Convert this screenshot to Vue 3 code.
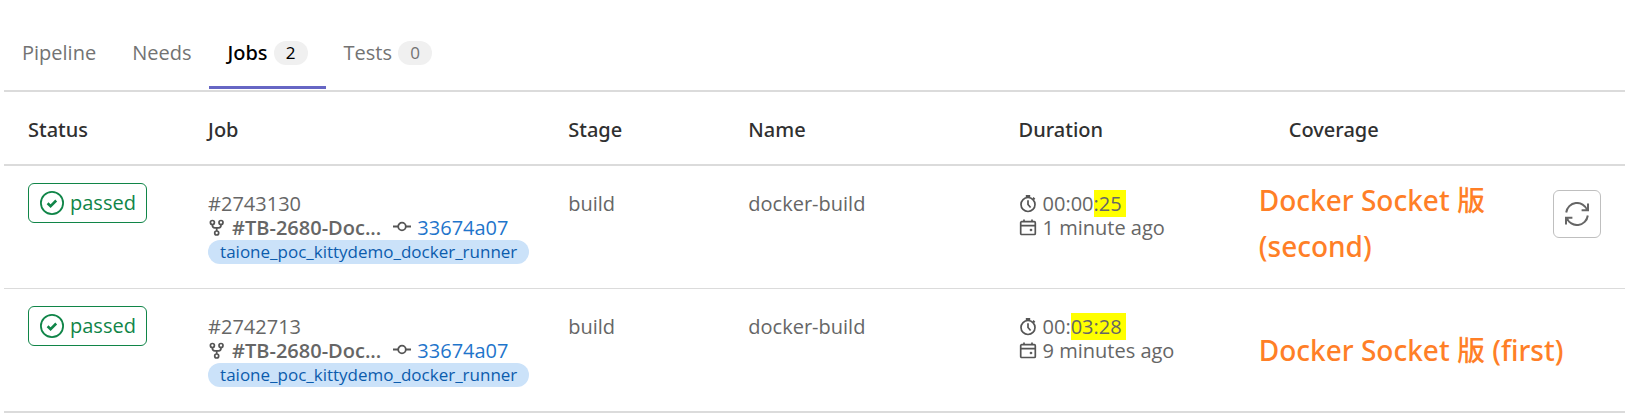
<script setup>
import { ref } from 'vue'

const active = ref('Jobs')

const tabs = [
  { label: 'Pipeline' },
  { label: 'Needs' },
  { label: 'Jobs', count: 2 },
  { label: 'Tests', count: 0 }
]

const jobs = [
  {
    id: '#2743130',
    time: '00:00',
    marked: ':25',
    finished: '1 minute ago',
    note: ['Docker Socket 版', '(second)'],
    retry: true
  },
  {
    id: '#2742713',
    time: '00:',
    marked: '03:28',
    finished: '9 minutes ago',
    note: ['Docker Socket 版 (first)'],
    retry: false
  }
]
</script>

<template>
  <main class="page">
    <nav class="tabs">
      <button
        v-for="tab in tabs"
        :key="tab.label"
        type="button"
        class="tab"
        :class="{ active: tab.label === active }"
        @click="active = tab.label"
      >
        {{ tab.label }}
        <span v-if="tab.count !== undefined" class="count">{{ tab.count }}</span>
      </button>
    </nav>

    <table class="jobs">
      <colgroup>
        <col class="w1" /><col class="w2" /><col class="w1" /><col class="w3" />
        <col class="w3" /><col class="w1" /><col class="w1" />
      </colgroup>
      <thead>
        <tr>
          <th>Status</th>
          <th>Job</th>
          <th>Stage</th>
          <th>Name</th>
          <th>Duration</th>
          <th>Coverage</th>
          <td></td>
        </tr>
      </thead>
      <tbody>
        <tr v-for="job in jobs" :key="job.id">
          <td class="status">
            <a href="#" class="badge">
              <svg width="24" height="24" viewBox="0 0 24 24" fill="none" stroke="currentColor">
                <circle cx="12" cy="12" r="11.1" stroke-width="1.8" />
                <path d="M7.6 12.2l3 2.9 5.6-5.6" stroke-width="2.6" />
              </svg>
              passed
            </a>
          </td>
          <td>
            <div class="line">{{ job.id }}</div>
            <div class="line">
              <svg class="icon" width="18" height="18" viewBox="0 0 18 18" fill="none" stroke="currentColor" stroke-width="1.7">
                <circle cx="4.4" cy="3.5" r="2" />
                <circle cx="13" cy="3.5" r="2" />
                <circle cx="8.7" cy="14" r="2" />
                <path d="M4.4 5.5v.8c0 1.8 1 2.6 2.4 2.6h3.8c1.5 0 2.4-.8 2.4-2.6v-.8M8.700 8.900v3.100" />
              </svg>
              <a href="#" class="branch">#TB-2680-Doc...</a>
              <svg class="icon commit" width="18" height="18" viewBox="0 0 18 18" fill="none" stroke="currentColor" stroke-width="1.8">
                <circle cx="9" cy="7.5" r="3.8" />
                <path d="M0 7.5h5.2M12.8 7.5H18" />
              </svg>
              <a href="#" class="sha">33674a07</a>
            </div>
            <span class="tag">taione_poc_kittydemo_docker_runner</span>
          </td>
          <td>build</td>
          <td>docker-build</td>
          <td>
            <div class="line">
              <svg class="icon" width="18" height="18" viewBox="0 0 18 18" fill="none" stroke="currentColor" stroke-width="1.7">
                <circle cx="9" cy="9.5" r="7" />
                <path d="M9 5.3v4.2l2.6 3M9 .5v2M14 2.7l1.7 1.7" />
                <path d="M6.8 1h4.4" stroke-width="2" />
              </svg>
              <span>{{ job.time }}<mark>{{ job.marked }}</mark></span>
            </div>
            <div class="line">
              <svg class="icon" width="18" height="18" viewBox="0 0 18 18" fill="none" stroke="currentColor" stroke-width="1.7">
                <rect x="1.7" y="2.7" width="14.6" height="12.8" rx="1" />
                <path d="M1.7 6.7h14.6M5 .5V3M13 .5V3" />
                <circle cx="12" cy="11" r=".5" />
              </svg>
              <span>{{ job.finished }}</span>
            </div>
          </td>
          <td class="coverage">
            <div class="note" :class="{ double: job.note.length > 1 }">
              <div v-for="text in job.note" :key="text">{{ text }}</div>
            </div>
          </td>
          <td class="action">
            <button v-if="job.retry" type="button" class="retry" aria-label="Retry">
              <svg width="24" height="24" viewBox="0 0 24 24" fill="none" stroke="currentColor" stroke-width="2">
                <path d="M1.2 10.5A10.9 10.9 0 0 1 22.2 8M23 1.5V8.2H16.6" />
                <path d="M22.8 13.5A10.9 10.9 0 0 1 1.8 16M1 22.5V15.8H7.4" />
              </svg>
            </button>
          </td>
        </tr>
      </tbody>
    </table>
  </main>
</template>

<style>
body {
  margin: 0;
  background: #fff;
}
</style>

<style scoped>
.page {
  padding: 17px 21px 0 4px;
  font: 20px/24px "Open Sans", "Noto Sans", sans-serif;
  color: #666;
}
.tabs {
  display: flex;
  padding-bottom: 1px;
  border-bottom: 2px solid #dbdbdb;
}
.tab {
  display: flex;
  align-items: center;
  gap: 6px;
  padding: 24px 18px;
  border: 0;
  background: none;
  font: inherit;
  color: #737373;
}
.tab.active,
th,
.note {
  font-family: "Noto Sans", "Noto Sans CJK TC", sans-serif;
  font-weight: 500;
}
.tab.active {
  color: #000;
  box-shadow: inset 0 -3px #6666c4;
}
.count {
  min-width: 34px;
  border-radius: 12px;
  background: #f0f0f0;
  font-size: 17px;
  font-weight: 400;
  text-align: center;
}
.jobs {
  width: 100%;
  table-layout: fixed;
  border-collapse: separate;
  border-spacing: 0;
  border-bottom: 2px solid #dbdbdb;
}
.w1 { width: 11.11%; }
.w2 { width: 22.22%; }
.w3 { width: 16.67%; }
th {
  padding: 26px 24px 22px;
  color: #303030;
  text-align: left;
}
thead th,
thead td {
  border-bottom: 2px solid #dbdbdb;
}
tbody td {
  padding: 26px 24px 24px;
  vertical-align: top;
  white-space: nowrap;
}
tbody tr + tr td {
  border-top: 1px solid #dbdbdb;
}
tbody .status {
  padding-top: 17px;
}
.badge {
  display: inline-flex;
  align-items: center;
  gap: 6px;
  box-sizing: border-box;
  height: 40px;
  padding: 0 10px 0 11px;
  border: 1px solid #108548;
  border-radius: 6px;
  color: #108548;
  text-decoration: none;
}
.line {
  display: flex;
  align-items: center;
}
.icon {
  flex: none;
  margin-right: 6px;
  color: #555;
}
.commit {
  margin-left: 12px;
}
.branch {
  color: #666;
  font-weight: 600;
  text-decoration: none;
}
.sha {
  color: #1f75cb;
  text-decoration: none;
}
.tag {
  display: inline-block;
  padding: 0 12px;
  border-radius: 12px;
  background: #cbe2f9;
  color: #0b5cad;
  font-size: 17px;
  vertical-align: top;
}
mark {
  padding-right: 4px;
  background: #ff0;
  color: inherit;
}
.coverage {
  position: relative;
}
.note {
  position: absolute;
  top: 0;
  bottom: 0;
  left: -6px;
  display: flex;
  flex-direction: column;
  justify-content: center;
  color: #ff7f27;
  font-size: 28px;
  line-height: 46px;
}
.note.double {
  bottom: 8px;
}
tbody .action {
  padding-top: 24px;
  text-align: right;
}
.retry {
  display: inline-flex;
  align-items: center;
  justify-content: center;
  width: 48px;
  height: 48px;
  padding: 0;
  border: 1px solid #bfbfbf;
  border-radius: 6px;
  background: #fff;
  color: #666;
}
</style>
